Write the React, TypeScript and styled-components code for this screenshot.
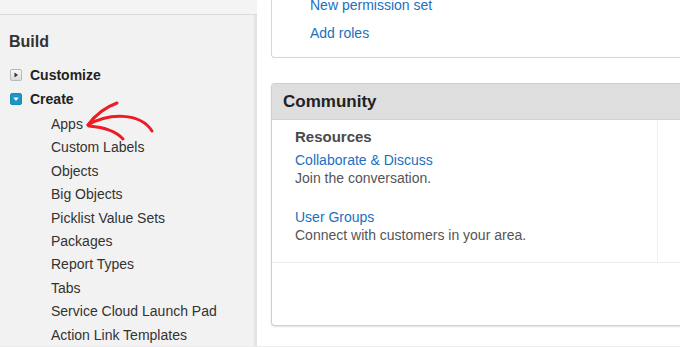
import React from 'react'
import styled, { createGlobalStyle } from 'styled-components'

const GlobalStyle = createGlobalStyle`
  html, body {
    margin: 0;
    padding: 0;
    background: #ffffff;
    font-family: "Liberation Sans", Arial, sans-serif;
  }
`

const Page = styled.div`
  display: flex;
  width: 680px;
  height: 347px;
  overflow: hidden;
  border-bottom: 1px solid #ececec;
  box-sizing: border-box;
`

const Sidebar = styled.aside`
  width: 257px;
  flex-shrink: 0;
  display: flex;
  flex-direction: column;
  background: #f2f2f2;
`

const SidebarTop = styled.div`
  height: 14px;
  flex-shrink: 0;
  background: #f4f4f4;
  border-bottom: 1px solid #dadada;
`

const SidebarBody = styled.div`
  flex: 1;
  min-height: 0;
  overflow: hidden;
  padding: 18px 0 0 9px;
  border-right: 3px solid #e4e4e4;
  position: relative;
`

const SectionTitle = styled.h2`
  margin: 0 0 12px;
  font-size: 16px;
  font-weight: bold;
  color: #333;
  line-height: 18px;
`

const Group = styled.div`
  display: flex;
  align-items: center;
  gap: 8px;
  height: 24px;
  padding-left: 1px;
  font-size: 14px;
  font-weight: bold;
  color: #222;
`

const Toggle = styled.span<{ $open?: boolean }>`
  width: 12px;
  height: 12px;
  box-sizing: border-box;
  border-radius: 2px;
  display: flex;
  align-items: center;
  justify-content: center;
  background: ${({ $open }) => ($open ? '#1a97c4' : 'linear-gradient(#f8f8f8, #dcdcdc)')};
  border: 1px solid ${({ $open }) => ($open ? '#1a8bb5' : '#b9b9b9')};
`

const Items = styled.ul`
  list-style: none;
  margin: 2px 0 0;
  padding: 0 0 0 42px;
`

const Item = styled.li`
  height: 23.4px;
  line-height: 23.4px;
  font-size: 14px;
  color: #333;
  white-space: nowrap;
`

const Arrow = styled.svg`
  position: absolute;
  left: 0;
  top: 0;
  pointer-events: none;
  overflow: visible;
`

const Content = styled.main`
  flex: 1;
  padding-left: 14px;
  border-right: 1px solid #e3e3e3;
  display: flex;
  flex-direction: column;
  gap: 25px;
`

const LinkCard = styled.section`
  margin-top: -21px;
  padding: 16px 0 15px 38px;
  border: 1px solid #d6d6d6;
  border-right: none;
  border-radius: 0 0 0 4px;
  display: flex;
  flex-direction: column;
  gap: 10px;
`

const Link = styled.a`
  font-size: 14px;
  line-height: 18px;
  color: #2170bf;
  text-decoration: none;
  cursor: pointer;
`

const Card = styled.section`
  border: 1px solid #cfcfcf;
  border-right: none;
  border-radius: 4px 0 0 4px;
  box-shadow: 0 1px 2px rgba(0, 0, 0, 0.12);
  overflow: hidden;
`

const CardHeader = styled.header`
  height: 35px;
  background: #dedede;
  border-bottom: 1px solid #d2d2d2;
  display: flex;
  align-items: center;
  padding-left: 11px;
  font-size: 17px;
  font-weight: bold;
  color: #222;
`

const CardRow = styled.div`
  display: grid;
  grid-template-columns: 386px 1fr;
  border-bottom: 1px solid #ececec;
`

const Column = styled.div`
  padding: 8px 0 18px 23px;
  border-right: 1px solid #f0f0f0;
  &:last-child {
    border-right: none;
  }
`

const ColumnTitle = styled.h3`
  margin: 0 0 5px;
  font-size: 15px;
  font-weight: bold;
  color: #4a4a4a;
  line-height: 18px;
`

const Resource = styled.div`
  display: flex;
  flex-direction: column;
  margin-bottom: 21px;
  &:last-child {
    margin-bottom: 0;
  }
`

const Desc = styled.span`
  font-size: 14px;
  line-height: 18px;
  color: #555;
`

const CardFooter = styled.div`
  height: 62px;
`

const createItems = [
  'Apps',
  'Custom Labels',
  'Objects',
  'Big Objects',
  'Picklist Value Sets',
  'Packages',
  'Report Types',
  'Tabs',
  'Service Cloud Launch Pad',
  'Action Link Templates',
]

const resources = [
  { title: 'Collaborate & Discuss', desc: 'Join the conversation.' },
  { title: 'User Groups', desc: 'Connect with customers in your area.' },
]

export default function App() {
  return (
    <>
      <GlobalStyle />
      <Page>
        <Sidebar>
          <SidebarTop />
          <SidebarBody>
            <SectionTitle>Build</SectionTitle>
            <Group>
              <Toggle>
                <svg width="6" height="6" viewBox="0 0 6 6">
                  <path d="M1.5 0.5 L5 3 L1.5 5.5 Z" fill="#333" />
                </svg>
              </Toggle>
              Customize
            </Group>
            <Group>
              <Toggle $open>
                <svg width="6" height="6" viewBox="0 0 6 6">
                  <path d="M0.3 1.5 L5.7 1.5 L3 5 Z" fill="#fff" />
                </svg>
              </Toggle>
              Create
            </Group>
            <Items>
              {createItems.map((name) => (
                <Item key={name}>{name}</Item>
              ))}
            </Items>
            <Arrow width="257" height="340" viewBox="0 15 257 340">
              <g fill="none" stroke="#ec1c24" strokeWidth="3" strokeLinecap="round">
                <path d="M88 125 C 108 113, 140 112, 152 131" />
                <path d="M88 125 C 96 114, 106 107, 117 103" />
                <path d="M89 126 C 101 127, 115 130, 123 139" />
              </g>
            </Arrow>
          </SidebarBody>
        </Sidebar>
        <Content>
          <LinkCard>
            <Link>New permission set</Link>
            <Link>Add roles</Link>
          </LinkCard>
          <Card>
            <CardHeader>Community</CardHeader>
            <CardRow>
              <Column>
                <ColumnTitle>Resources</ColumnTitle>
                {resources.map((r) => (
                  <Resource key={r.title}>
                    <Link>{r.title}</Link>
                    <Desc>{r.desc}</Desc>
                  </Resource>
                ))}
              </Column>
              <Column />
            </CardRow>
            <CardFooter />
          </Card>
        </Content>
      </Page>
    </>
  )
}
